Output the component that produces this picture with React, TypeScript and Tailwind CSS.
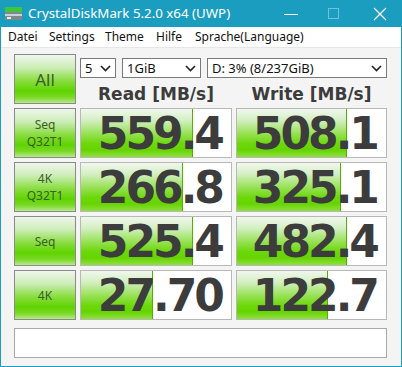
import React from 'react';

const rows = [
  { label: ['Seq', 'Q32T1'], r: 559.4, rs: '559.4', w: 508.1, ws: '508.1' },
  { label: ['4K', 'Q32T1'], r: 266.8, rs: '266.8', w: 325.1, ws: '325.1' },
  { label: ['Seq'], r: 525.4, rs: '525.4', w: 482.4, ws: '482.4' },
  { label: ['4K'], r: 27.7, rs: '27.70', w: 122.7, ws: '122.7' },
];

function frac(v: number) {
  return Math.min(1, 0.183 + 0.206 * Math.log10(v));
}

function Chevron() {
  return (
    <svg width="11" height="7" viewBox="0 0 11 7" className="shrink-0">
      <path d="M1 1 L5.5 5.5 L10 1" fill="none" stroke="#222" strokeWidth="1.6" />
    </svg>
  );
}

function Select({ text, w }: { text: string; w: string }) {
  return (
    <div className={`${w} h-[20px] border border-[#7a7a7a] bg-white flex items-center justify-between pl-[4px] pr-[4px] text-[13px] leading-none text-[#111] font-['Noto_Sans',sans-serif]`}>
      <span>{text}</span>
      <Chevron />
    </div>
  );
}

function LabelBtn({ lines, big }: { lines: string[]; big?: boolean }) {
  return (
    <div className="h-[50px] border border-[#8a8a8a] bg-[linear-gradient(to_bottom,#eef6ea_0%,#cfeebc_25%,#86dc3a_55%,#5fd400_75%,#7ad826_88%,#b8ea8a_100%)] flex flex-col items-center justify-center text-[#3b5e2a] font-['Noto_Sans',sans-serif]">
      {big ? (
        <span className="text-[17px] leading-none">{lines[0]}</span>
      ) : (
        lines.map((l) => (
          <span key={l} className="text-[12px] leading-[17px]">{l}</span>
        ))
      )}
    </div>
  );
}

function ValueBox({ v, s }: { v: number; s: string }) {
  return (
    <div className="relative h-[50px] border border-[#b8b8b8] bg-white overflow-hidden">
      <div
        className="absolute left-0 top-0 bottom-0 border-r border-[#4fb000] bg-[linear-gradient(to_bottom,#f0f7ee_0%,#d6f0c6_22%,#9ae25a_50%,#6cd80a_72%,#66d400_85%,#8ee040_100%)]"
        style={{ width: `${frac(v) * 100}%` }}
      />
      <div className="relative h-full flex items-center justify-end pr-[9px] pt-[1px] text-[44px] leading-none font-bold tracking-[-3px] text-[#3c3c3c] font-['DejaVu_Sans',sans-serif]">
        {s}
      </div>
    </div>
  );
}

export default function App() {
  return (
    <div className="w-[402px] h-[367px] flex flex-col bg-[#1b9dc0] px-px pb-px">
      {/* title bar */}
      <div className="h-[27px] flex items-center text-white font-['Noto_Sans',sans-serif] shrink-0">
        <svg width="18" height="14" viewBox="0 0 18 14" className="ml-[4px] mr-[5px]">
          <rect x="0" y="0" width="17" height="5" fill="#3ec43e" />
          <rect x="0" y="5" width="17" height="8" fill="#7d8a8a" />
          <rect x="0" y="7" width="17" height="2" fill="#c9d2d2" />
          <rect x="2" y="10" width="4" height="2" fill="#e8eeee" />
        </svg>
        <span className="text-[13.3px] leading-none">CrystalDiskMark 5.2.0 x64 (UWP)</span>
        <div className="flex-1" />
        <svg width="14" height="14" viewBox="0 0 14 14" className="mr-[30px]">
          <line x1="0" y1="7.5" x2="14" y2="7.5" stroke="#fff" strokeWidth="1" />
        </svg>
        <svg width="12" height="12" viewBox="0 0 12 12" className="mr-[33px]">
          <rect x="0.5" y="0.5" width="10" height="10" fill="none" stroke="#6cc3db" strokeWidth="1" />
        </svg>
        <svg width="14" height="14" viewBox="0 0 14 14" className="mr-[14px]">
          <path d="M1 1 L13 13 M13 1 L1 13" stroke="#fff" strokeWidth="1.2" />
        </svg>
      </div>
      {/* menu */}
      <div className="h-[20px] bg-white flex items-center pl-[7px] text-[12px] leading-none text-[#111] font-['Noto_Sans',sans-serif] shrink-0">
        <span className="w-[41px]">Datei</span>
        <span className="w-[56px]">Settings</span>
        <span className="w-[51px]">Theme</span>
        <span className="w-[39px]">Hilfe</span>
        <span>Sprache(Language)</span>
      </div>
      {/* content */}
      <div className="flex-1 bg-[#f4f4f4] border-t border-[#e6e6e6] pl-[13px] pt-[6px]">
        <div className="grid grid-cols-[62px_152px_151px] gap-[4px]">
          <LabelBtn lines={['All']} big />
          <div className="col-span-2 flex flex-col">
            <div className="flex gap-[6px] mt-[4px]">
              <Select text="5" w="w-[36px]" />
              <Select text="1GiB" w="w-[79px]" />
              <Select text="D: 3% (8/237GiB)" w="w-[180px]" />
            </div>
            <div className="grid grid-cols-[152px_151px] gap-[4px] mt-[8px]">
              <div className="text-center text-[17px] leading-none font-bold text-[#3c3c3c] font-['DejaVu_Sans',sans-serif]">Read [MB/s]</div>
              <div className="text-center text-[17px] leading-none font-bold text-[#3c3c3c] font-['DejaVu_Sans',sans-serif]">Write [MB/s]</div>
            </div>
          </div>
          {rows.map((r) => (
            <React.Fragment key={r.rs + r.ws}>
              <LabelBtn lines={r.label} />
              <ValueBox v={r.r} s={r.rs} />
              <ValueBox v={r.w} s={r.ws} />
            </React.Fragment>
          ))}
        </div>
        <div className="w-[373px] h-[30px] mt-[8px] border border-[#a8a8a8] bg-white" />
      </div>
    </div>
  );
}
